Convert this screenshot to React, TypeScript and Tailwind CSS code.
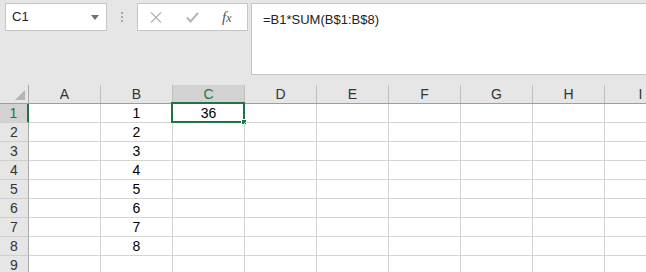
import React from "react";

const cols = ["A", "B", "C", "D", "E", "F", "G", "H", "I"];
const rows = [1, 2, 3, 4, 5, 6, 7, 8, 9];
const bValues: Record<number, string> = { 1: "1", 2: "2", 3: "3", 4: "4", 5: "5", 6: "6", 7: "7", 8: "8" };

function Toolbar() {
  return (
    <div className="flex h-[85px] items-start pt-[3px]">
      {/* Name box */}
      <div className="ml-[5px] flex h-[28px] w-[102px] items-center justify-between border border-[#c6c6c6] bg-white pl-[6px] pr-[7px]">
        <span className="text-[13px] text-[#222]">C1</span>
        <svg width="8" height="5" viewBox="0 0 8 5">
          <path d="M0 0h8L4 5z" fill="#707070" />
        </svg>
      </div>

      {/* grip dots */}
      <div className="ml-[14px] mt-[9px] flex w-[2px] flex-col gap-[2px]">
        <span className="h-[2px] w-[2px] bg-[#a6a6a6]" />
        <span className="h-[2px] w-[2px] bg-[#a6a6a6]" />
        <span className="h-[2px] w-[2px] bg-[#a6a6a6]" />
      </div>

      {/* cancel / enter / fx */}
      <div className="ml-[14px] flex h-[28px] w-[111px] items-center border border-[#c6c6c6] bg-white">
        <svg className="ml-[12px]" width="12" height="11" viewBox="0 0 12 11">
          <path d="M1 0.5L11 10.5M11 0.5L1 10.5" stroke="#b4b4b4" strokeWidth="1.3" fill="none" />
        </svg>
        <svg className="ml-[24px]" width="13" height="11" viewBox="0 0 13 11">
          <path d="M1 5.5L4.5 9.5L12 1" stroke="#b4b4b4" strokeWidth="2" fill="none" />
        </svg>
        <span className="ml-[23px] font-['Liberation_Serif',serif] text-[15px] italic leading-none text-[#555]">
          f<span className="text-[12px]">x</span>
        </span>
      </div>

      {/* formula bar */}
      <div className="ml-[3px] h-[72px] flex-1 border border-r-0 border-[#c6c6c6] bg-white pl-[11px] pt-[6px] text-[13px] text-[#222]">
        =B1*SUM(B$1:B$8)
      </div>
    </div>
  );
}

function Sheet() {
  return (
    <div className="flex flex-col">
      {/* column header */}
      <div className="flex h-[19px] border-b border-[#9e9e9e] bg-[#e6e6e6]">
        <div className="flex w-[29px] shrink-0 items-end justify-end border-r border-[#a8a8a8] pb-[3px] pr-[3px]">
          <svg width="10" height="10" viewBox="0 0 10 10">
            <path d="M10 0V10H0z" fill="#b5b5b5" />
          </svg>
        </div>
        {cols.map((c) => (
          <div
            key={c}
            className={`flex w-[72px] shrink-0 items-center justify-center border-r border-[#bdbdbd] text-[14px] leading-none ${
              c === "C" ? "bg-[#d2d2d2] text-[#217346]" : "text-[#333]"
            }`}
          >
            {c}
          </div>
        ))}
      </div>

      {rows.map((r) => (
        <div key={r} className="flex h-[19px] shrink-0 bg-white">
          <div
            className={`flex w-[29px] shrink-0 items-center justify-center border-b border-[#cfcfcf] text-[14px] leading-none ${
              r === 1
                ? "border-r-2 border-r-[#217346] bg-[#d2d2d2] text-[#217346]"
                : "border-r border-r-[#a8a8a8] bg-[#e6e6e6] text-[#333]"
            }`}
          >
            {r}
          </div>
          {cols.map((c) => (
            <div
              key={c}
              className="relative flex w-[72px] shrink-0 items-center justify-center border-b border-r border-[#d4d4d4] text-[14px] leading-none text-black"
            >
              {c === "B" ? bValues[r] : null}
              {c === "C" && r === 1 ? (
                <>
                  36
                  <div className="absolute -left-[2px] -top-[2px] -bottom-[1px] -right-[1px] border-2 border-[#217346]" />
                  <div className="absolute -bottom-[3px] -right-[3px] h-[6px] w-[6px] border border-white bg-[#217346]" />
                </>
              ) : null}
            </div>
          ))}
        </div>
      ))}
    </div>
  );
}

export default function App() {
  return (
    <div className="h-[272px] w-[646px] overflow-hidden bg-[#e6e6e6] font-['Liberation_Sans',Arial,sans-serif]">
      <Toolbar />
      <Sheet />
    </div>
  );
}
